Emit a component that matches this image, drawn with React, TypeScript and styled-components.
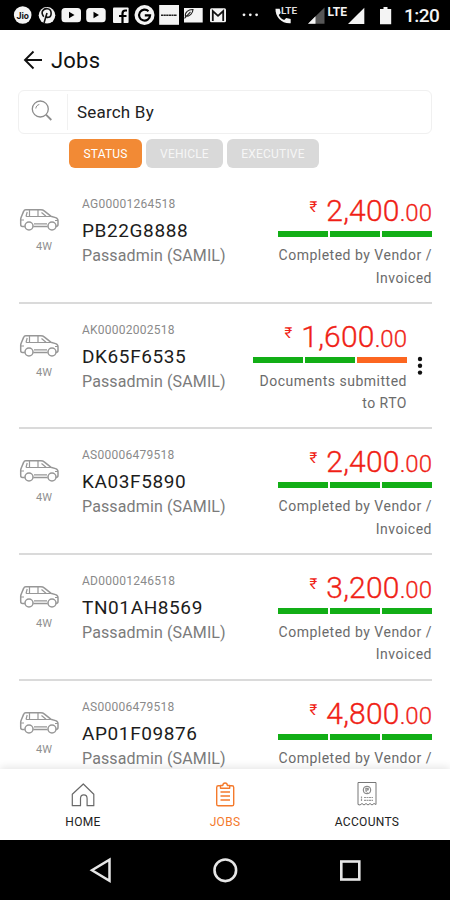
import React from "react";
import styled, { createGlobalStyle } from "styled-components";

const GlobalStyle = createGlobalStyle`
  * { box-sizing: border-box; }
  body { margin: 0; background: #fff; font-family: Roboto, "Liberation Sans", sans-serif; }
`;

const Screen = styled.div`
  width: 450px;
  height: 900px;
  display: flex;
  flex-direction: column;
  overflow: hidden;
  background: #fff;
`;

const StatusBar = styled.div`
  height: 30px;
  flex: none;
  background: #000;
  color: #f4f4f4;
  display: flex;
  align-items: center;
`;

const Clock = styled.span`
  font-size: 19px;
  line-height: 30px;
  font-weight: 500;
  padding-top: 2px;
  letter-spacing: -0.5px;
`;

const StatusIcons = styled.svg`
  width: 404px;
  height: 30px;
  flex: none;
  font-family: Roboto, sans-serif;
`;

const Header = styled.header`
  height: 60px;
  flex: none;
  display: flex;
  align-items: center;
  gap: 8px;
  padding-left: 23px;
`;

const Title = styled.h1`
  margin: 0;
  padding-top: 2px;
  font-size: 22px;
  font-weight: 400;
  line-height: 30px;
  letter-spacing: 0.2px;
  color: #111;
`;

const SearchBox = styled.div`
  width: 414px;
  height: 44px;
  flex: none;
  margin-left: 18px;
  border: 1.5px solid #f0f0f0;
  border-radius: 6px;
  display: flex;
  align-items: center;
`;

const SearchIcon = styled.div`
  width: 49px;
  height: 36px;
  border-right: 1px solid #f1f1f1;
  padding: 5px 0 0 11px;
`;

const SearchText = styled.span`
  padding-left: 9px;
  font-size: 17px;
  letter-spacing: 0.2px;
  line-height: 24px;
  color: #222;
`;

const Chips = styled.div`
  display: flex;
  flex: none;
  gap: 4px;
  margin: 5px 0 0 69px;
  height: 29px;
`;

const Chip = styled.div<{ $w: number; $active?: boolean }>`
  width: ${(p) => p.$w}px;
  height: 29px;
  border-radius: 6px;
  background: ${(p) => (p.$active ? "#f28a35" : "#d9d9d9")};
  color: ${(p) => (p.$active ? "#fff" : "#f6f6f6")};
  font-size: 12px;
  line-height: 30px;
  letter-spacing: 0.2px;
  text-align: center;
`;

const List = styled.main`
  flex: 1;
  min-height: 0;
  overflow: hidden;
  margin-top: 10px;
  padding: 0 18px 0 19px;
`;

const Row = styled.div`
  height: 125.65px;
  display: flex;
  border-bottom: 2px solid #dadada;
`;

const Vehicle = styled.div`
  width: 63px;
  flex: none;
  padding-top: 30px;
  svg { display: block; }
`;

const VehicleType = styled.div`
  width: 50px;
  text-align: center;
  font-size: 11px;
  line-height: 14px;
  padding-top: 8px;
  color: #909090;
`;

const Info = styled.div`
  width: 160px;
  flex: none;
  padding-top: 18px;
  white-space: nowrap;
`;

const Code = styled.div`
  font-size: 12px;
  line-height: 16px;
  letter-spacing: 0.25px;
  color: #8a8a8a;
`;

const Plate = styled.div`
  margin-top: 5px;
  font-size: 19px;
  line-height: 28px;
  letter-spacing: 0.6px;
  color: #1c1c1c;
`;

const Owner = styled.div`
  font-size: 16px;
  line-height: 22px;
  letter-spacing: 0.13px;
  color: #7b7b7b;
`;

const Payment = styled.div`
  flex: 1;
  display: flex;
  flex-direction: column;
  align-items: flex-end;
  padding-top: 15px;
`;

const Amount = styled.div`
  display: flex;
  align-items: baseline;
  height: 36px;
  line-height: 36px;
  color: #f01f17;
  white-space: nowrap;
`;

const Rupee = styled.span`
  font-size: 15px;
  margin-right: 9px;
  align-self: flex-start;
  line-height: 28px;
`;

const Whole = styled.span`
  font-size: 30px;
  font-weight: 300;
  letter-spacing: 0.2px;
  -webkit-text-stroke: 0.35px #f01f17;
`;

const Fraction = styled.span`
  font-size: 24px;
  font-weight: 300;
  -webkit-text-stroke: 0.3px #f01f17;
`;

const Progress = styled.div`
  width: 154px;
  height: 6px;
  display: flex;
  gap: 2px;
  margin-top: 2px;
`;

const Segment = styled.div<{ $pending?: boolean }>`
  flex: 1;
  background: ${(p) => (p.$pending ? "#fc6620" : "#12ae16")};
`;

const State = styled.div`
  width: 160px;
  margin-top: 7px;
  text-align: right;
  font-size: 14px;
  line-height: 22.5px;
  letter-spacing: 0.5px;
  color: #6b6b6b;
`;

const Menu = styled.div`
  width: 25px;
  flex: none;
  padding: 52px 0 0 10px;
`;

const TabBar = styled.nav`
  height: 71px;
  flex: none;
  display: grid;
  grid-template-columns: repeat(3, 142px);
  justify-content: center;
  background: #fff;
  box-shadow: 0 -2px 8px rgba(0, 0, 0, 0.1);
  z-index: 1;
`;

const Tab = styled.div<{ $active?: boolean }>`
  display: flex;
  flex-direction: column;
  align-items: center;
  padding-top: 12px;
  font-size: 12px;
  line-height: 16px;
  letter-spacing: 0.3px;
  color: ${(p) => (p.$active ? "#f47a2c" : "#222")};
  svg { margin-bottom: 4px; }
`;

const SystemBar = styled.div`
  height: 60px;
  flex: none;
  background: #000;
  display: grid;
  grid-template-columns: repeat(3, 125px);
  justify-content: center;
  justify-items: center;
  align-items: center;
  z-index: 1;
`;

const Glyphs = () => (
  <StatusIcons viewBox="0 0 404 30" fill="#f4f4f4">
    <circle cx="22.7" cy="15" r="8.8" />
    <text x="22.7" y="18.5" fontSize="9" fontWeight="700" textAnchor="middle" fill="#111">Jio</text>
    <circle cx="47" cy="15.3" r="8.3" />
    <path d="M44 23l3-10M43.8 16.7c-4-5 0-8.300 3.600-8 5 .4 4.600 8 1 8.600-1.500.3-2.500-.6-2.500-1.600" fill="none" stroke="#111" strokeWidth="1.600" />
    <rect x="61.500" y="8" width="19.500" height="14.300" rx="3.500" />
    <path d="M69 11.800v6.400l5.500-3.200z" fill="#000" />
    <rect x="86.200" y="8" width="19.500" height="14.300" rx="3.500" />
    <path d="M93.500 11.800v6.400L99 15z" fill="#000" />
    <rect x="113" y="7.500" width="15.600" height="15.500" rx="1" />
    <path d="M127 10.500h-1.600c-2.200 0-2.900 1-2.900 3V23M119 16h7.500" fill="none" stroke="#000" strokeWidth="2.200" />
    <circle cx="144.500" cy="15" r="10" />
    <path d="M148.500 11.200a5.500 5.500 0 1 0 1.600 4.200h-5.300" fill="none" stroke="#000" strokeWidth="2.100" />
    <rect x="159.200" y="5" width="19.800" height="19.800" />
    <path d="M161 15.200h16" stroke="#222" strokeWidth="1.600" strokeDasharray="2.200 .4" />
    <rect x="184" y="8" width="18.700" height="14.500" />
    <path d="M185.500 16.500c-1-4 3-7.300 7.500-7-.2 3.800-3 7-7.500 7zm-1 1.800 6-6.500" fill="none" stroke="#222" strokeWidth="1.100" />
    <rect x="210" y="8.200" width="16" height="14" rx="1.500" />
    <path d="M212.800 21V11l5.200 4.800 5.200-4.800V21" fill="none" stroke="#111" strokeWidth="1.800" />
    <circle cx="244" cy="14.800" r="1.400" />
    <circle cx="250.300" cy="14.800" r="1.400" />
    <circle cx="256.600" cy="14.800" r="1.400" />
    <path d="M275.500 8.800h4.200l1 4.300-2 1.800c1.300 2.500 3.200 4.200 5.500 5l2-2 4.500 1.200v4.200C282 24 275 17 275.500 8.800z" />
    <text x="281" y="14" fontSize="9" fontWeight="700" textLength="16" lengthAdjust="spacingAndGlyphs" fill="#ddd">LTE</text>
    <path d="M308 23.800 324.500 7.500v16.300z" fill="#565656" />
    <path d="M308 23.800l7.500-7.500v7.500z" />
    <text x="327.500" y="16" fontSize="12" fontWeight="700" textLength="19.500">LTE</text>
    <path d="M348 24 364.300 7.700V24z" />
    <path d="M380 9h3.500V7h4v2h3.700v15.300H380z" />
  </StatusIcons>
);

const BackArrow = () => (
  <svg width="20" height="20" viewBox="0 0 20 20" fill="none" stroke="#111" strokeWidth="1.900">
    <path d="M19 10H2M10.500 1.500 2 10l8.500 8.500" />
  </svg>
);

const Magnifier = () => (
  <svg width="24" height="24" viewBox="0 0 24 24" fill="none" stroke="#8d8d8d" strokeWidth="1.300">
    <circle cx="10.300" cy="10" r="8" />
    <path d="M5.800 9.500c.2-2 1.500-3.700 3.500-4" strokeWidth="1" />
    <path d="m16 15.700 5.300 5.300" strokeWidth="1.800" />
  </svg>
);

const Car = () => (
  <svg width="41" height="24" viewBox="0 0 41 24" fill="none" stroke="#979797" strokeWidth="1.500" strokeLinejoin="round">
    <path d="M5.800 18.500H3.500c-1.300 0-1.800-.8-1.800-2v-5.300c0-1.300.5-2 1-3.200L4.600 3.400C5 2.300 5.600 1.800 6.800 1.800h15c1.600 0 2.500.3 3.700 1.300l6.300 5.100 4.800 1.400c1.700.5 2.400 1.500 2.400 3.200v3.700c0 1.400-.7 2-2.300 2M14.300 18.500h14.300" />
    <path d="M15 15.800h13M7 8.500h25M7 8.500 8.200 4M10.500 2v6.300M19 2v6.500M22.500 4.500l4.500 3.700M2 12h3M36 12.500h3" strokeWidth="1.200" />
    <circle cx="10" cy="18" r="4" />
    <circle cx="33" cy="18" r="4" />
  </svg>
);

const Dots = () => (
  <svg width="6" height="20" viewBox="0 0 6 20" fill="#111">
    <circle cx="3" cy="3" r="2.200" />
    <circle cx="3" cy="9.800" r="2.200" />
    <circle cx="3" cy="16.600" r="2.200" />
  </svg>
);

const HomeIcon = () => (
  <svg width="26" height="29" viewBox="0 0 26 29" fill="none" stroke="#696969" strokeWidth="1.200" strokeLinejoin="round">
    <path d="M2.300 13.300 13.300 3l10.500 10.300v11.400h-6.700v-7c0-5-6.600-5-6.600 0v7H2.300z" />
  </svg>
);

const JobsIcon = () => (
  <svg width="26" height="29" viewBox="0 0 26 29" fill="none" stroke="#f47a2c" strokeWidth="1.400" strokeLinejoin="round">
    <path d="M8.500 4.800H6.300c-1 0-1.600.6-1.600 1.600v16.800c0 1 .6 1.600 1.600 1.600h13.800c1 0 1.600-.6 1.600-1.600V6.400c0-1-.6-1.600-1.600-1.600h-2.400M8.500 7.200V4.500h2.300c.3-3.300 4.300-3.300 4.600 0h2.300v2.700zM8.500 11h9.500M8.500 15h9.500M8.500 19h9.500" />
  </svg>
);

const AccountsIcon = () => (
  <svg width="26" height="29" viewBox="0 0 26 29" fill="none" stroke="#777" strokeWidth="1">
    <path d="M4 23.500V1.500h18v22l-2-1-2 1.500-2-1.500-2 1.500-2-1.500-2 1.500-2-1.500-2 1.500z" />
    <circle cx="13" cy="9" r="3.800" />
    <path d="M11 7.300h4M11 8.800h4M12.300 7.300c2.500 0 2 2.500-.8 2.500l2 2" strokeWidth=".8" />
    <path d="M7.500 15.500V20M10 16.500h9M10 19.300h9" strokeDasharray="2 .5" stroke="#999" strokeWidth="1.200" />
  </svg>
);

const BackKey = () => (
  <svg width="24" height="26" viewBox="0 0 24 26" fill="none" stroke="#e6e6e6" strokeWidth="2.500">
    <path d="M21.500 2.800v21L4 13.300z" />
  </svg>
);

const HomeKey = () => (
  <svg width="26" height="26" viewBox="0 0 26 26" fill="none" stroke="#e6e6e6" strokeWidth="2.600">
    <circle cx="13.300" cy="13.300" r="10.800" />
  </svg>
);

const RecentKey = () => (
  <svg width="24" height="24" viewBox="0 0 24 24" fill="none" stroke="#e6e6e6" strokeWidth="2.600">
    <rect x="3.300" y="3.500" width="18" height="18" />
  </svg>
);

type Job = { code: string; plate: string; amount: string; pending?: boolean };

const jobs: Job[] = [
  { code: "AG00001264518", plate: "PB22G8888", amount: "2,400" },
  { code: "AK00002002518", plate: "DK65F6535", amount: "1,600", pending: true },
  { code: "AS00006479518", plate: "KA03F5890", amount: "2,400" },
  { code: "AD00001246518", plate: "TN01AH8569", amount: "3,200" },
  { code: "AS00006479518", plate: "AP01F09876", amount: "4,800" },
];

const JobRow = ({ job }: { job: Job }) => (
  <Row>
    <Vehicle>
      <Car />
      <VehicleType>4W</VehicleType>
    </Vehicle>
    <Info>
      <Code>{job.code}</Code>
      <Plate>{job.plate}</Plate>
      <Owner>Passadmin (SAMIL)</Owner>
    </Info>
    <Payment>
      <Amount>
        <Rupee>₹</Rupee>
        <Whole>{job.amount}</Whole>
        <Fraction>.00</Fraction>
      </Amount>
      <Progress>
        <Segment />
        <Segment />
        <Segment $pending={job.pending} />
      </Progress>
      <State>
        {job.pending ? "Documents submitted" : "Completed by Vendor /"}
        <br />
        {job.pending ? "to RTO" : "Invoiced"}
      </State>
    </Payment>
    {job.pending && (
      <Menu>
        <Dots />
      </Menu>
    )}
  </Row>
);

export default function App() {
  return (
    <>
      <GlobalStyle />
      <Screen>
        <StatusBar>
          <Glyphs />
          <Clock>1:20</Clock>
        </StatusBar>
        <Header>
          <BackArrow />
          <Title>Jobs</Title>
        </Header>
        <SearchBox>
          <SearchIcon>
            <Magnifier />
          </SearchIcon>
          <SearchText>Search By</SearchText>
        </SearchBox>
        <Chips>
          <Chip $w={73} $active>STATUS</Chip>
          <Chip $w={77}>VEHICLE</Chip>
          <Chip $w={92}>EXECUTIVE</Chip>
        </Chips>
        <List>
          {jobs.map((job) => (
            <JobRow key={job.plate} job={job} />
          ))}
        </List>
        <TabBar>
          <Tab>
            <HomeIcon />
            HOME
          </Tab>
          <Tab $active>
            <JobsIcon />
            JOBS
          </Tab>
          <Tab>
            <AccountsIcon />
            ACCOUNTS
          </Tab>
        </TabBar>
        <SystemBar>
          <BackKey />
          <HomeKey />
          <RecentKey />
        </SystemBar>
      </Screen>
    </>
  );
}
